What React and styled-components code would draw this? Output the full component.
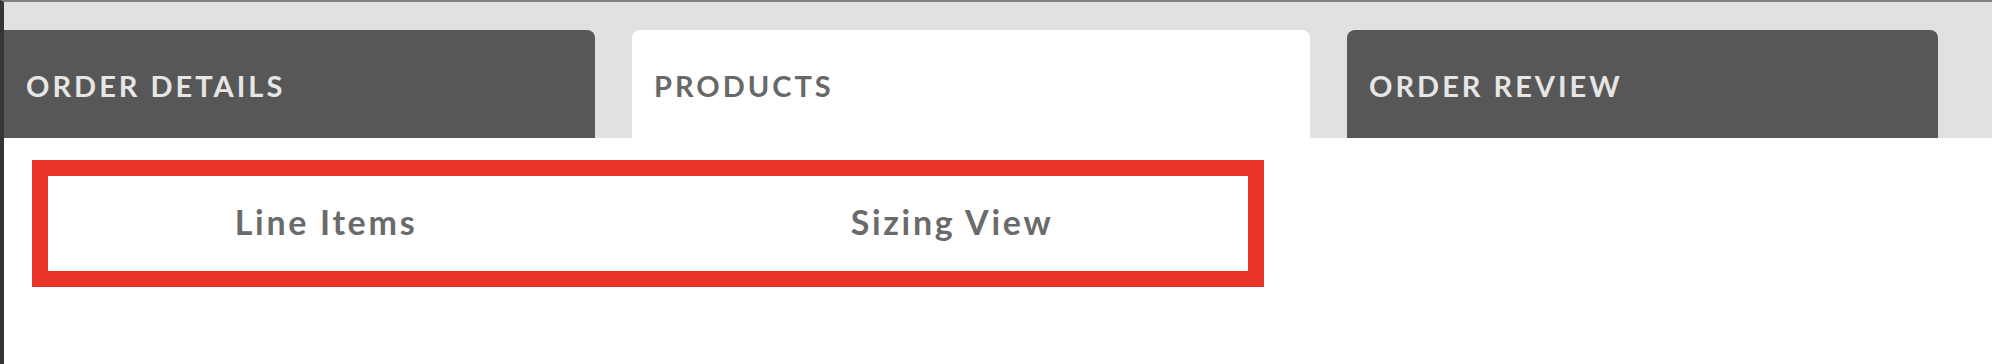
import React from "react";
import styled, { createGlobalStyle } from "styled-components";

const GlobalStyle = createGlobalStyle`
  html, body {
    margin: 0;
    padding: 0;
    background: #ffffff;
    font-family: Lato, "Open Sans", sans-serif;
  }
`;

const Page = styled.div`
  min-height: 100vh;
  box-sizing: border-box;
  background: #ffffff;
  border-left: 4px solid #353535;
  border-top: 2px solid #7f7f7f;
`;

const TabBar = styled.nav`
  display: flex;
  align-items: flex-end;
  gap: 37px;
  height: 136px;
  box-sizing: border-box;
  padding-top: 28px;
  background: #e1e1e1;
`;

const Tab = styled.div`
  flex: 0 0 ${(p) => p.$width}px;
  height: 108px;
  box-sizing: border-box;
  display: flex;
  align-items: center;
  padding: 3px 0 0 22px;
  border-radius: 8px 8px 0 0;
  background: ${(p) => (p.$active ? "#ffffff" : "#575757")};
  color: ${(p) => (p.$active ? "#686868" : "#e6e6e6")};
  font-family: Lato, sans-serif;
  font-weight: 700;
  font-size: 29px;
  letter-spacing: 3px;
  text-transform: uppercase;
  white-space: nowrap;
  &:first-child {
    border-top-left-radius: 0;
  }
`;

const Content = styled.section`
  position: relative;
  padding-top: 19px;
`;

const SubTabs = styled.div`
  display: grid;
  grid-template-columns: 626px 626px;
  margin-left: 9px;
  height: 128px;
  align-items: center;
`;

const SubTab = styled.div`
  text-align: center;
  font-family: Lato, sans-serif;
  font-weight: 700;
  font-size: 34px;
  letter-spacing: 2.7px;
  color: #6a6a6a;
  white-space: nowrap;
`;

const Highlight = styled.div`
  position: absolute;
  left: 28px;
  top: 22px;
  width: 1232px;
  height: 127px;
  box-sizing: border-box;
  border: 16px solid #e83427;
  pointer-events: none;
`;

const tabs = [
  { label: "Order Details", width: 591 },
  { label: "Products", width: 678, active: true },
  { label: "Order Review", width: 591 },
];

export default function App() {
  return (
    <>
      <GlobalStyle />
      <Page>
        <TabBar>
          {tabs.map((t) => (
            <Tab key={t.label} $width={t.width} $active={t.active}>
              {t.label}
            </Tab>
          ))}
        </TabBar>
        <Content>
          <SubTabs>
            <SubTab>Line Items</SubTab>
            <SubTab>Sizing View</SubTab>
          </SubTabs>
          <Highlight />
        </Content>
      </Page>
    </>
  );
}
